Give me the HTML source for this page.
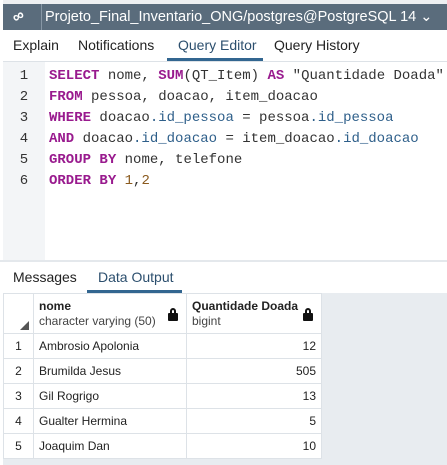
<!DOCTYPE html>
<html><head><style>
*{margin:0;padding:0;box-sizing:border-box}
body{width:447px;height:465px;background:#fff;position:relative;overflow:hidden;font-family:"Liberation Sans",sans-serif}
.abs{position:absolute}
.code{font-family:"Liberation Mono",monospace;font-size:14px;color:#333;white-space:pre;line-height:21px}
.k{color:#991a8e;font-weight:bold}
.v{color:#2e5f8a}
.n{color:#8a5a1e}
.g{font-family:"Liberation Mono",monospace;font-size:14px;color:#333;line-height:21px;text-align:center}
table{border-collapse:collapse;font-size:12px;color:#222}
td{border:1px solid #dde2e7;height:25px;padding:0 5px}
.lock{position:absolute;right:8px;top:14px;width:10px;height:13px}
.lock:before{content:"";position:absolute;left:2px;top:0;width:6px;height:7px;border:2px solid #111;border-radius:3px 3px 0 0;box-sizing:border-box}
.lock:after{content:"";position:absolute;left:0;top:5px;width:10px;height:8px;background:#111;border-radius:1px}
</style></head><body>
<div class="abs" style="left:0;top:0;width:447px;height:4px;background:#eef0f2"></div>
<div class="abs" style="left:3px;top:4px;width:444px;height:26px;background:#5a6c7c"></div>
<div class="abs" style="left:41px;top:4px;width:1px;height:26px;background:#8797a5"></div>
<div class="abs" style="left:13px;top:8px;color:#fff;font-size:16px;font-weight:bold;transform:rotate(-30deg)">&#8734;</div>
<div class="abs" style="left:45px;top:9px;color:#fff;font-size:14.5px">Projeto_Final_Inventario_ONG/postgres@PostgreSQL 14 &#8964;</div>
<div class="abs" style="left:0;top:0;width:3px;height:465px;background:#fff"></div>
<div class="abs" style="left:13px;top:37px;font-size:14px;color:#222">Explain</div>
<div class="abs" style="left:78px;top:37px;font-size:14px;color:#222">Notifications</div>
<div class="abs" style="left:178px;top:37px;font-size:14px;color:#2c4f6e">Query Editor</div>
<div class="abs" style="left:274px;top:37px;font-size:14px;color:#222">Query History</div>
<div class="abs" style="left:167px;top:58px;width:96px;height:3px;background:#326690"></div>
<div class="abs" style="left:3px;top:61px;width:444px;height:1px;background:#dde2e7"></div>
<div class="abs" style="left:3px;top:62px;width:42px;height:198px;background:#f3f5f7"></div>
<div class="abs g" style="left:3px;top:66px;width:42px">1<br>2<br>3<br>4<br>5<br>6</div>
<div class="abs code" style="left:49px;top:66px"><span class="k">SELECT</span> nome, <span class="k">SUM</span>(QT_Item) <span class="k">AS</span> "Quantidade Doada"
<span class="k">FROM</span> pessoa, doacao, item_doacao
<span class="k">WHERE</span> doacao<span class="v">.id_pessoa</span> = pessoa<span class="v">.id_pessoa</span>
<span class="k">AND</span> doacao<span class="v">.id_doacao</span> = item_doacao<span class="v">.id_doacao</span>
<span class="k">GROUP</span> <span class="k">BY</span> nome, telefone
<span class="k">ORDER</span> <span class="k">BY</span> <span class="n">1</span>,<span class="n">2</span></div>
<div class="abs" style="left:0;top:260px;width:447px;height:2px;background:#e4e8ec"></div>
<div class="abs" style="left:13px;top:269px;font-size:14px;color:#222">Messages</div>
<div class="abs" style="left:98px;top:269px;font-size:14px;color:#2c4f6e">Data Output</div>
<div class="abs" style="left:87px;top:290px;width:95px;height:3px;background:#326690"></div>
<div class="abs" style="left:3px;top:293px;width:444px;height:172px;background:#e8ecf0"></div>
<table class="abs" style="left:3px;top:293px;background:#fff">
<tr style="height:40px"><td style="width:30px;height:40px;position:relative"><span style="position:absolute;left:16px;bottom:3px;width:0;height:0;border-left:9px solid transparent;border-bottom:9px solid #555"></span></td>
<td style="width:153px;height:40px;position:relative;line-height:15px"><b>nome</b><br><span style="color:#444">character varying (50)</span><span class="lock"></span></td>
<td style="width:135px;height:40px;position:relative;line-height:15px"><b>Quantidade Doada</b><br><span style="color:#444">bigint</span><span class="lock"></span></td></tr>
<tr><td style="text-align:center">1</td><td>Ambrosio Apolonia</td><td style="text-align:right">12</td></tr>
<tr><td style="text-align:center">2</td><td>Brumilda Jesus</td><td style="text-align:right">505</td></tr>
<tr><td style="text-align:center">3</td><td>Gil Rogrigo</td><td style="text-align:right">13</td></tr>
<tr><td style="text-align:center">4</td><td>Gualter Hermina</td><td style="text-align:right">5</td></tr>
<tr><td style="text-align:center">5</td><td>Joaquim Dan</td><td style="text-align:right">10</td></tr>
</table>
</body></html>
